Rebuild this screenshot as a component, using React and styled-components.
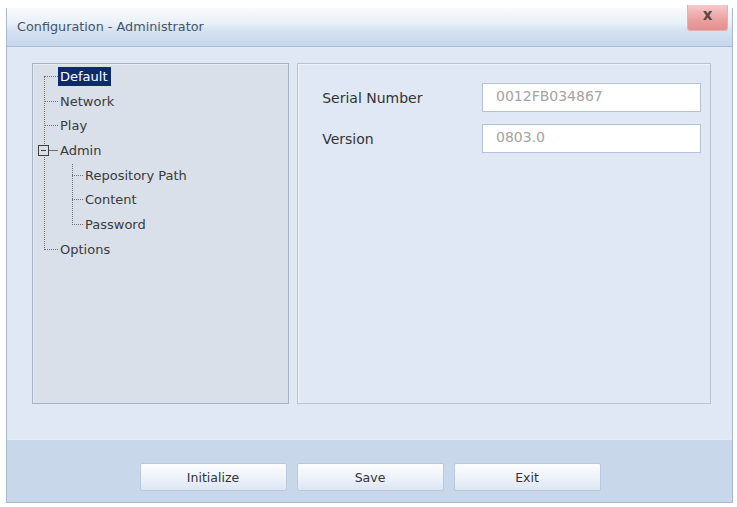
import React from 'react';
import styled, { createGlobalStyle } from 'styled-components';

const TREE = [
  { label: 'Default', selected: true },
  { label: 'Network' },
  { label: 'Play' },
  {
    label: 'Admin',
    expanded: true,
    children: ['Repository Path', 'Content', 'Password'],
  },
  { label: 'Options' },
];

const FIELDS = [
  { label: 'Serial Number', value: '0012FB034867' },
  { label: 'Version', value: '0803.0' },
];

export default function App() {
  return (
    <>
      <GlobalStyle />
      <Window>
        <TitleBar>
          <Title>Configuration - Administrator</Title>
          <CloseButton type="button">x</CloseButton>
        </TitleBar>
        <Body>
          <TreePanel>
            <Tree>
              {TREE.map((node) => (
                <React.Fragment key={node.label}>
                  <Item>
                    <Branch $solid={node.expanded}>
                      {node.expanded && <Toggle />}
                    </Branch>
                    <Label $selected={node.selected}>{node.label}</Label>
                  </Item>
                  {node.children && (
                    <SubTree>
                      {node.children.map((child) => (
                        <Item key={child} $indent={28}>
                          <Branch $width={11} />
                          <Label>{child}</Label>
                        </Item>
                      ))}
                    </SubTree>
                  )}
                </React.Fragment>
              ))}
            </Tree>
          </TreePanel>
          <DetailPanel>
            {FIELDS.map((f) => (
              <FieldRow key={f.label}>
                <FieldLabel>{f.label}</FieldLabel>
                <FieldInput value={f.value} readOnly />
              </FieldRow>
            ))}
          </DetailPanel>
        </Body>
        <Footer>
          <Button type="button">Initialize</Button>
          <Button type="button">Save</Button>
          <Button type="button">Exit</Button>
        </Footer>
      </Window>
    </>
  );
}

const GlobalStyle = createGlobalStyle`
  html, body {
    margin: 0;
    padding: 0;
    background: #ffffff;
    font-family: "DejaVu Sans", "Liberation Sans", sans-serif;
  }
`;

const Window = styled.div`
  position: relative;
  margin: 8px 0 0 6px;
  width: 727px;
  height: 495px;
  box-sizing: border-box;
  border: 1px solid #a9b9cd;
  border-top: none;
  display: flex;
  flex-direction: column;
  background: #dfe8f4;
`;

const TitleBar = styled.div`
  height: 39px;
  flex: none;
  box-sizing: border-box;
  display: flex;
  align-items: center;
  padding: 0 0 2px 10px;
  background: linear-gradient(
    to bottom,
    #f8fafd 0%,
    #e9f0f8 40%,
    #d5e2f2 60%,
    #c6d7ec 100%
  );
  border-bottom: 1px solid #a8bcd5;
`;

const Title = styled.span`
  font-size: 12.8px;
  color: #45546a;
`;

const CloseButton = styled.button`
  position: absolute;
  top: -3px;
  right: 4px;
  width: 41px;
  height: 26px;
  padding: 0 0 4px;
  border: 1px solid #e4b0b0;
  border-top: none;
  border-radius: 0 0 3px 3px;
  background: linear-gradient(to bottom, #f6caca 0%, #eca2a2 55%, #e48f8f 100%);
  color: #5b4646;
  font-family: "DejaVu Sans", sans-serif;
  font-weight: bold;
  font-size: 15px;
  line-height: 1;
`;

const Body = styled.div`
  flex: 1;
  display: flex;
  gap: 8px;
  padding: 16px 21px 0 25px;
  box-sizing: border-box;
`;

const TreePanel = styled.div`
  width: 258px;
  height: 341px;
  box-sizing: border-box;
  background: #d9e0ea;
  border: 1px solid #a7b3c3;
  box-shadow: inset 1px 1px 0 #e6ebf2;
`;

const Tree = styled.ul`
  position: relative;
  list-style: none;
  margin: 0;
  padding: 0 0 0 11px;

  &::before {
    content: '';
    position: absolute;
    left: 11px;
    top: 12px;
    bottom: 12px;
    border-left: 1px dotted #6f6f6f;
  }
`;

const SubTree = styled.li`
  position: relative;

  &::before {
    content: '';
    position: absolute;
    left: 28px;
    top: 1px;
    bottom: 12px;
    border-left: 1px dotted #6f6f6f;
  }
`;

const Item = styled.div`
  display: flex;
  align-items: center;
  height: 24.7px;
  padding-left: ${(p) => p.$indent || 0}px;
`;

const Branch = styled.span`
  position: relative;
  flex: none;
  width: ${(p) => p.$width || 14}px;
  height: 0;
  border-top: 1px ${(p) => (p.$solid ? 'solid' : 'dotted')} #6f6f6f;
`;

const Toggle = styled.span`
  position: absolute;
  left: -6px;
  top: -6px;
  width: 9px;
  height: 9px;
  background: #d9e0ea;
  border: 1px solid #3f3f3f;

  &::after {
    content: '';
    position: absolute;
    left: 2px;
    right: 2px;
    top: 4px;
    border-top: 1px solid #3f3f3f;
  }
`;

const Label = styled.span`
  font-size: 13px;
  line-height: 19px;
  padding: 0 3px 0 2px;
  color: ${(p) => (p.$selected ? '#ffffff' : '#3a3a3a')};
  background: ${(p) => (p.$selected ? '#0d2a6e' : 'transparent')};
`;

const DetailPanel = styled.div`
  width: 415px;
  height: 341px;
  box-sizing: border-box;
  padding: 19px 9px 0 24px;
  display: flex;
  flex-direction: column;
  gap: 12px;
  background: #dfe8f4;
  border: 1px solid #b6c4d6;
  box-shadow: inset 1px 1px 0 #edf2f9;
`;

const FieldRow = styled.div`
  display: flex;
  align-items: center;
  justify-content: space-between;
`;

const FieldLabel = styled.span`
  font-size: 14px;
  color: #333333;
`;

const FieldInput = styled.input`
  width: 219px;
  height: 29px;
  box-sizing: border-box;
  padding: 0 0 3px 13px;
  border: 1px solid #b3c2d4;
  background: #ffffff;
  color: #a3a3a3;
  font-family: "DejaVu Sans", sans-serif;
  font-size: 14px;
  outline: none;
`;

const Footer = styled.div`
  height: 63px;
  flex: none;
  box-sizing: border-box;
  display: flex;
  justify-content: center;
  align-items: flex-start;
  gap: 10px;
  padding: 23px 0 0 1px;
  background: #c8d7ea;
  border-top: 1px solid #e2ebf6;
`;

const Button = styled.button`
  width: 147px;
  height: 28px;
  border: 1px solid #b9c8db;
  border-radius: 2px;
  background: linear-gradient(to bottom, #fbfcfe 0%, #eef3fa 50%, #dbe6f4 100%);
  color: #333333;
  font-family: "DejaVu Sans", sans-serif;
  font-size: 12.5px;
  padding: 0;
`;
